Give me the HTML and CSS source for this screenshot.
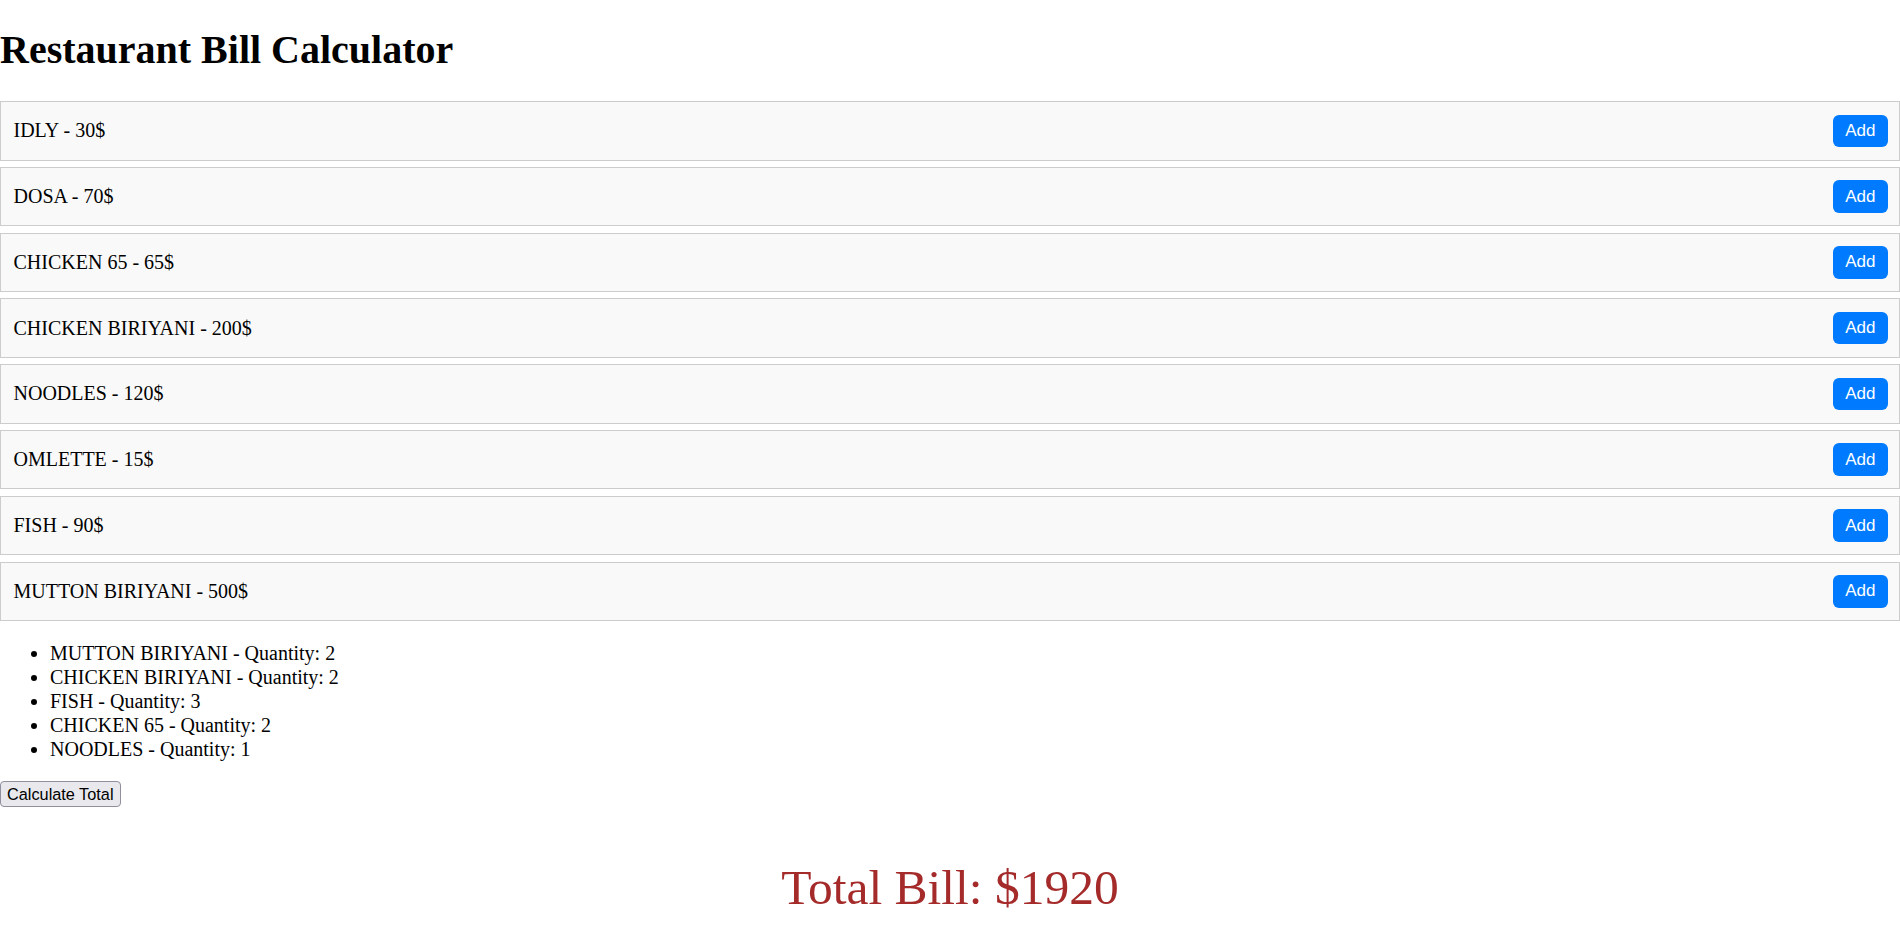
FILE: index.html
```html
<!DOCTYPE html>
<html lang="en">
<head>
<meta charset="utf-8">
<title>Restaurant Bill Calculator</title>
<link rel="stylesheet" href="styles.css">
</head>
<body>
<h1 class="title">Restaurant Bill Calculator</h1>
<div class="menu">
  <div class="item"><span class="item-name">IDLY - 30$</span><button class="add-btn">Add</button></div>
  <div class="item"><span class="item-name">DOSA - 70$</span><button class="add-btn">Add</button></div>
  <div class="item"><span class="item-name">CHICKEN 65 - 65$</span><button class="add-btn">Add</button></div>
  <div class="item"><span class="item-name">CHICKEN BIRIYANI - 200$</span><button class="add-btn">Add</button></div>
  <div class="item"><span class="item-name">NOODLES - 120$</span><button class="add-btn">Add</button></div>
  <div class="item"><span class="item-name">OMLETTE - 15$</span><button class="add-btn">Add</button></div>
  <div class="item"><span class="item-name">FISH - 90$</span><button class="add-btn">Add</button></div>
  <div class="item"><span class="item-name">MUTTON BIRIYANI - 500$</span><button class="add-btn">Add</button></div>
</div>
<ul class="order-list">
  <li>MUTTON BIRIYANI - Quantity: 2</li>
  <li>CHICKEN BIRIYANI - Quantity: 2</li>
  <li>FISH - Quantity: 3</li>
  <li>CHICKEN 65 - Quantity: 2</li>
  <li>NOODLES - Quantity: 1</li>
</ul>
<button class="calc-btn">Calculate Total</button>
<div class="total">Total Bill: $1920</div>
</body>
</html>
```

FILE: styles.css
```css
html, body {
  margin: 0;
  padding: 0;
  background: #ffffff;
}

body {
  font-family: "Liberation Serif", "Times New Roman", serif;
  font-size: 20px;
  color: #000000;
}

.title {
  font-size: 40px;
  font-weight: bold;
  line-height: 46px;
  margin: 27px 0 28px;
}

.menu {
  display: flex;
  flex-direction: column;
  gap: 6.3px;
}

.item {
  display: flex;
  justify-content: space-between;
  align-items: center;
  background: #f9f9f9;
  border: 1px solid #cccccc;
  padding: 12.5px 11.5px 12.5px 12.5px;
}

.item-name {
  line-height: 23px;
}

.add-btn {
  font-family: "Liberation Sans", Arial, sans-serif;
  font-size: 17px;
  height: 32.5px;
  padding: 0 12px;
  background: #007bff;
  color: #ffffff;
  border: none;
  border-radius: 6px;
}

.order-list {
  margin: 20px 0;
  padding-left: 50px;
}

.order-list li {
  line-height: 24px;
}

.calc-btn {
  display: block;
  font-family: "Liberation Sans", Arial, sans-serif;
  font-size: 16.3px;
  height: 26px;
  padding: 0 6px;
  margin: 0;
  background: #e9e9ed;
  color: #000000;
  border: 1px solid #8f8f9d;
  border-radius: 4px;
}

.total {
  margin-top: 51.8px;
  text-align: center;
  font-size: 49.5px;
  line-height: 57px;
  color: #a52a2a;
}
```
